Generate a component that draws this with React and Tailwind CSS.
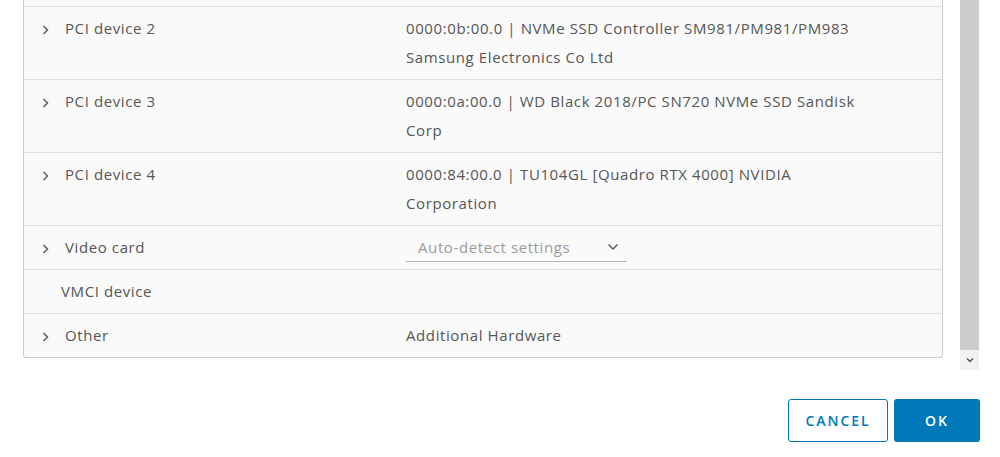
import React from "react";

const font = { fontFamily: '"Open Sans", "Liberation Sans", sans-serif' };

function Chevron() {
  return (
    <svg width="8" height="10" viewBox="0 0 8 10" className="shrink-0">
      <path d="M1.5 1 L5.5 5 L1.5 9" fill="none" stroke="#565656" strokeWidth="1.4" />
    </svg>
  );
}

function Row({ label, lines, chevron = true, children }) {
  return (
    <div className="flex border-t border-[#dddddd] pt-[7px] pb-[7px] leading-[29px]">
      <div className={`flex w-[382px] shrink-0 items-start ${chevron ? "pl-[18px]" : "pl-[37px]"}`}>
        {chevron && (
          <div className="flex h-[29px] w-[23px] items-center pt-[2px]">
            <Chevron />
          </div>
        )}
        <span>{label}</span>
      </div>
      <div className="flex-1">
        {children ||
          lines.map((l, i) => (
            <div key={i} className="whitespace-nowrap">
              {l}
            </div>
          ))}
      </div>
    </div>
  );
}

export default function App() {
  return (
    <div className="h-[457px] w-[1000px] bg-white text-[15px] tracking-[0.6px] text-[#565656]" style={font}>
      <div className="flex h-[370px]">
        <div className="flex-1 pl-[23px] pr-[17px]">
          <div className="rounded-b-[3px] border-x border-b border-[#cccccc] bg-[#fafafa]">
            <div className="h-[6px]" />
            <Row
              label="PCI device 2"
              lines={["0000:0b:00.0 | NVMe SSD Controller SM981/PM981/PM983", "Samsung Electronics Co Ltd"]}
            />
            <Row
              label="PCI device 3"
              lines={["0000:0a:00.0 | WD Black 2018/PC SN720 NVMe SSD Sandisk", "Corp"]}
            />
            <Row
              label="PCI device 4"
              lines={["0000:84:00.0 | TU104GL [Quadro RTX 4000] NVIDIA", "Corporation"]}
            />
            <Row label="Video card">
              <div className="flex h-[29px] w-[221px] items-center justify-between border-b border-[#b3b3b3] pl-[12px] pr-[8px] text-[#9a9a9a]">
                <span className="whitespace-nowrap">Auto-detect settings</span>
                <svg width="12" height="8" viewBox="0 0 12 8">
                  <path d="M1.5 1.5 L6 6 L10.5 1.5" fill="none" stroke="#565656" strokeWidth="1.4" />
                </svg>
              </div>
            </Row>
            <Row label="VMCI device" chevron={false} lines={[""]} />
            <Row label="Other" lines={["Additional Hardware"]} />
          </div>
        </div>
        <div className="flex w-[19px] flex-col">
          <div className="flex-1 bg-[#cdcdcd]" />
          <div className="flex h-[20px] items-center justify-center bg-[#f1f1f1]">
            <svg width="8" height="6" viewBox="0 0 8 6">
              <path d="M1 1.5 L4 4.5 L7 1.5" fill="none" stroke="#555555" strokeWidth="1.5" />
            </svg>
          </div>
        </div>
        <div className="w-[21px]" />
      </div>
      <div className="flex justify-end gap-[6px] pr-[20px] pt-[29px]">
        <button className="flex h-[43px] w-[100px] items-center justify-center rounded-[3px] border border-[#0079b8] bg-white text-[14px] font-semibold tracking-[0.14em] text-[#0079b8]">
          CANCEL
        </button>
        <button className="flex h-[43px] w-[86px] items-center justify-center rounded-[3px] bg-[#0079b8] text-[14px] font-semibold tracking-[0.14em] text-white">
          OK
        </button>
      </div>
    </div>
  );
}
